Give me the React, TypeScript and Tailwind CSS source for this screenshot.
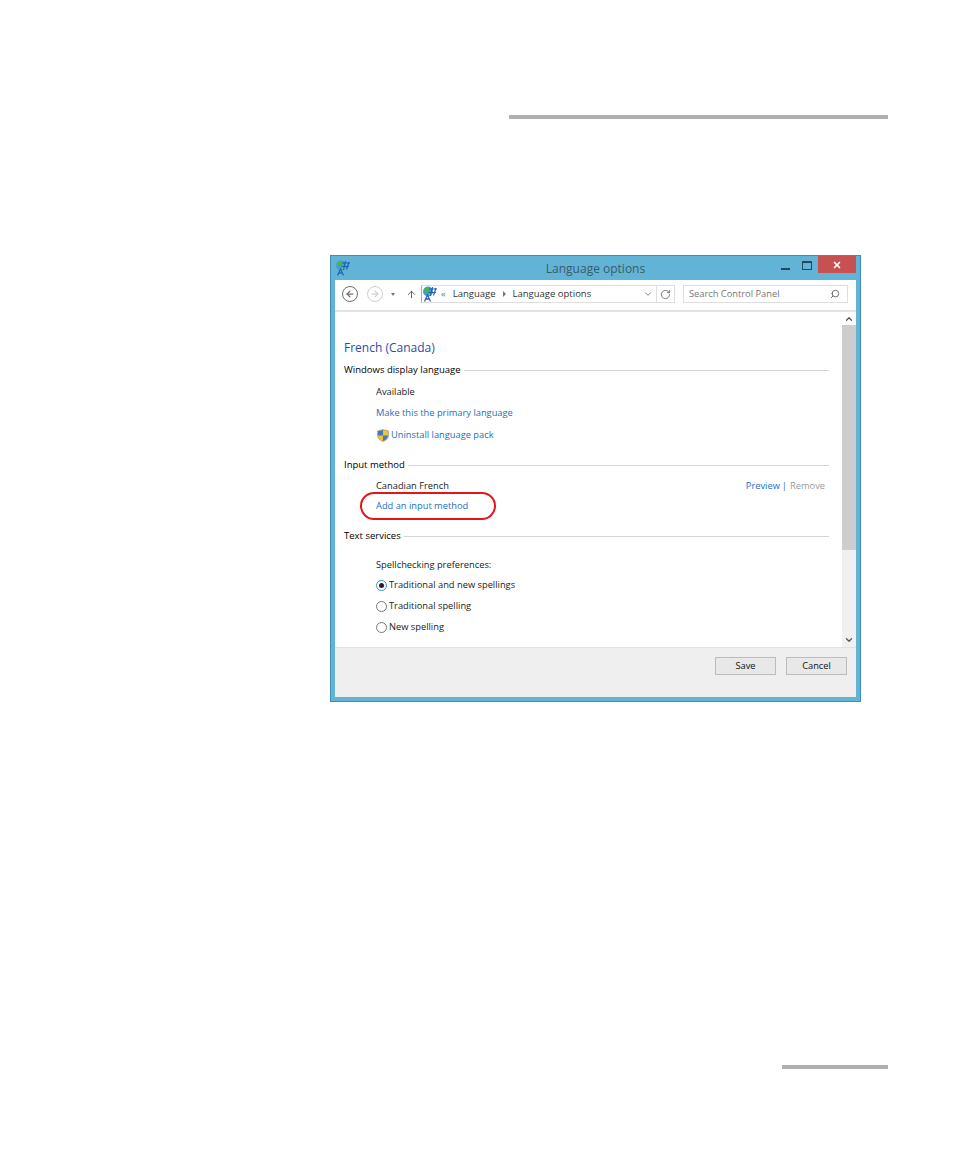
import { ChevronDown, ChevronUp, Search, RotateCw, ArrowUp, ArrowLeft, ArrowRight, X } from "lucide-react";
import type { ReactNode } from "react";

function GlobeIcon() {
  return (
    <svg width="16" height="16" viewBox="0 0 16 16" className="shrink-0">
      <circle cx="6" cy="5.5" r="5" fill="#3f9fd8" />
      <path d="M2 3 C4 0.8 7 0.8 8 2.5 L6.5 5.5 L3.5 7 Z" fill="#4fb34a" />
      <path d="M6.5 6.5 L10 6 L9 9.5 L7 9.5 Z" fill="#6cc05a" />
      <path d="M7 3 H15 M6.5 6.5 H14 M10.5 1 L8.5 10 M14 2 L11.5 9.5" stroke="#1d5fb4" strokeWidth="1.1" fill="none" />
      <path d="M2.5 15.5 L5.5 9 L8.5 15.5 M3.8 13 H7.2" stroke="#2a63c0" strokeWidth="1.3" fill="none" />
    </svg>
  );
}

function ShieldIcon() {
  return (
    <svg width="12" height="13" viewBox="0 0 12 13" className="shrink-0">
      <path d="M6 0.5 L11.5 2 V6.5 C11.5 9.5 9 11.5 6 12.5 C3 11.5 0.5 9.5 0.5 6.5 V2 Z" fill="#f2c230" stroke="#8a8a70" strokeWidth="0.6" />
      <path d="M6 1 V6.5 H1 V2.3 Z" fill="#3f78c8" />
      <path d="M6 6.5 H11 C10.8 9 8.8 11 6 12 Z" fill="#3f78c8" />
    </svg>
  );
}

function SectionHeader({ label }: { label: string }) {
  return (
    <div className="flex h-[14px] items-center gap-[3px] pl-px pr-[13px] text-[9.5px] text-black">
      <span>{label}</span>
      <div className="h-px flex-1 bg-[#d4d4d4]" />
    </div>
  );
}

function Radio({ checked = false, children }: { checked?: boolean; children: ReactNode }) {
  return (
    <div className="flex h-[14px] items-center gap-[2px] text-[#222]">
      <span
        className={`flex h-[11px] w-[11px] items-center justify-center rounded-full border bg-white ${
          checked ? "border-[#3d8fe0]" : "border-[#777]"
        }`}
      >
        {checked && <span className="h-[5px] w-[5px] rounded-full bg-[#222]" />}
      </span>
      <span>{children}</span>
    </div>
  );
}

function DialogButton({ children }: { children: ReactNode }) {
  return (
    <button className="flex h-[18px] w-[61px] items-center justify-center border border-[#bcbcbc] bg-[#e8e8e8] text-[#111]">
      {children}
    </button>
  );
}

function LanguageWindow() {
  return (
    <div className="flex h-[447px] w-[531px] flex-col border border-[#3f8fb3] bg-[#62b4d6] px-[4px] pb-[4px] text-[9.3px] font-['Open_Sans',sans-serif]">
      {/* Title bar */}
      <div className="relative flex h-[24px] shrink-0 items-center justify-center text-[12px] text-[#3d5a69]">
        <div className="absolute left-0 top-[4px]">
          <GlobeIcon />
        </div>
        <span className="pt-px">Language options</span>
        <div className="absolute right-0 top-0 flex items-start">
          <div className="mr-[12px] mt-[12px] h-[2px] w-[9px] bg-[#2c4654]" />
          <div className="mr-[6px] mt-[5px] h-[9px] w-[10px] border border-t-2 border-[#2c4654]" />
          <div className="flex h-[17px] w-[38px] items-center justify-center bg-[#c75050]">
            <X size={10} strokeWidth={4} className="text-white" />
          </div>
        </div>
      </div>

      {/* Address toolbar */}
      <div className="flex h-[32px] shrink-0 items-center border-b-2 border-[#e2e2e2] bg-white pb-[2px] pl-[7px] pr-[8px]">
        <div className="flex h-[16px] w-[16px] items-center justify-center rounded-full border-[1.5px] border-[#6e6e6e]">
          <ArrowLeft size={10} strokeWidth={3} className="text-[#6e6e6e]" />
        </div>
        <div className="ml-[9px] flex h-[16px] w-[16px] items-center justify-center rounded-full border-[1.5px] border-[#cfcfcf]">
          <ArrowRight size={10} strokeWidth={3} className="text-[#cfcfcf]" />
        </div>
        <div className="ml-[8px] h-0 w-0 border-x-[2.5px] border-t-[3px] border-x-transparent border-t-[#777]" />
        <ArrowUp size={11} strokeWidth={2} className="ml-[11px] text-[#555]" />
        <div className="ml-[4px] flex h-[18px] w-[254px] items-center border border-[#dedede] border-l-[#aaa] text-[9.5px] text-[#333]">
          <GlobeIcon />
          <span className="ml-[3px] text-[#777]">«</span>
          <span className="ml-[7px]">Language</span>
          <span className="ml-[7px] h-0 w-0 border-y-[3px] border-l-[3px] border-y-transparent border-l-[#777]" />
          <span className="ml-[7px]">Language options</span>
          <div className="ml-auto flex h-full items-center">
            <ChevronDown size={10} strokeWidth={2} className="mr-[3px] text-[#666]" />
            <div className="flex h-full w-[18px] items-center justify-center border-l border-[#dedede]">
              <RotateCw size={11} strokeWidth={1.8} className="text-[#666]" />
            </div>
          </div>
        </div>
        <div className="ml-[8px] flex h-[18px] w-[165px] items-center justify-between border border-[#dedede] pl-[5px] pr-[7px] text-[#777]">
          <span>Search Control Panel</span>
          <Search size={10} strokeWidth={2} className="-scale-x-100 text-[#555]" />
        </div>
      </div>

      {/* Scrolling content */}
      <div className="flex h-[335px] shrink-0 bg-white">
        <div className="relative flex-1 pl-[8px] pt-[27px]">
          <div className="flex h-[17px] items-center pl-px text-[12px] text-[#1f4fa5]">French (Canada)</div>
          <div className="mt-[7px]">
            <SectionHeader label="Windows display language" />
          </div>
          <div className="mt-[8px] flex h-[14px] items-center pl-[33px] text-[#222]">Available</div>
          <div className="mt-[7px] flex h-[14px] items-center pl-[33px] text-[#1a6fc4]">Make this the primary language</div>
          <div className="mt-[8px] flex h-[14px] items-center gap-[2px] pl-[34px] text-[#1a6fc4]">
            <ShieldIcon />
            <span>Uninstall language pack</span>
          </div>
          <div className="mt-[16px]">
            <SectionHeader label="Input method" />
          </div>
          <div className="mt-[7px] flex h-[14px] items-center justify-between pl-[33px] pr-[17px] text-[#222]">
            <span>Canadian French</span>
            <span className="flex gap-[3px]">
              <span className="-mr-px text-[#1a6fc4]">Preview</span>
              <span className="text-[#1a6fc4]">|</span>
              <span className="text-[#9a9a9a]">Remove</span>
            </span>
          </div>
          <div className="mt-[6px] flex h-[14px] items-center pl-[33px] text-[#1a6fc4]">Add an input method</div>
          <div className="mt-[16px]">
            <SectionHeader label="Text services" />
          </div>
          <div className="mt-[15px] flex h-[14px] items-center pl-[33px] text-[#222]">Spellchecking preferences:</div>
          <div className="mt-[6px] flex flex-col gap-[7px] pl-[33px]">
            <Radio checked>Traditional and new spellings</Radio>
            <Radio>Traditional spelling</Radio>
            <Radio>New spelling</Radio>
          </div>
          {/* Red annotation around the link */}
          <div className="absolute left-[25px] top-[180px] h-[28px] w-[136px] rounded-full border-2 border-[#e8141c]" />
        </div>
        <div className="flex w-[14px] shrink-0 flex-col items-center justify-between bg-[#f0f0f0] pb-[2px]">
          <div className="flex w-full flex-col items-center">
            <div className="flex h-[13px] w-full items-center justify-center bg-white">
              <ChevronUp size={10} strokeWidth={3} className="text-[#555]" />
            </div>
            <div className="h-[225px] w-full bg-[#cdcdcd]" />
          </div>
          <ChevronDown size={10} strokeWidth={3} className="text-[#555]" />
        </div>
      </div>

      {/* Footer */}
      <div className="flex flex-1 justify-end gap-[10px] border-t border-[#e2e2e2] bg-[#efefef] pr-[9px] pt-[9px]">
        <DialogButton>Save</DialogButton>
        <DialogButton>Cancel</DialogButton>
      </div>
    </div>
  );
}

export default function App() {
  return (
    <div className="h-[1158px] w-[954px] overflow-hidden bg-white pt-[115px]">
      <div className="ml-[509px] h-[4px] w-[379px] bg-[#b0b0b0]" />
      <div className="ml-[330px] mt-[136px]">
        <LanguageWindow />
      </div>
      <div className="ml-[782px] mt-[363px] h-[4px] w-[106px] bg-[#b0b0b0]" />
    </div>
  );
}
